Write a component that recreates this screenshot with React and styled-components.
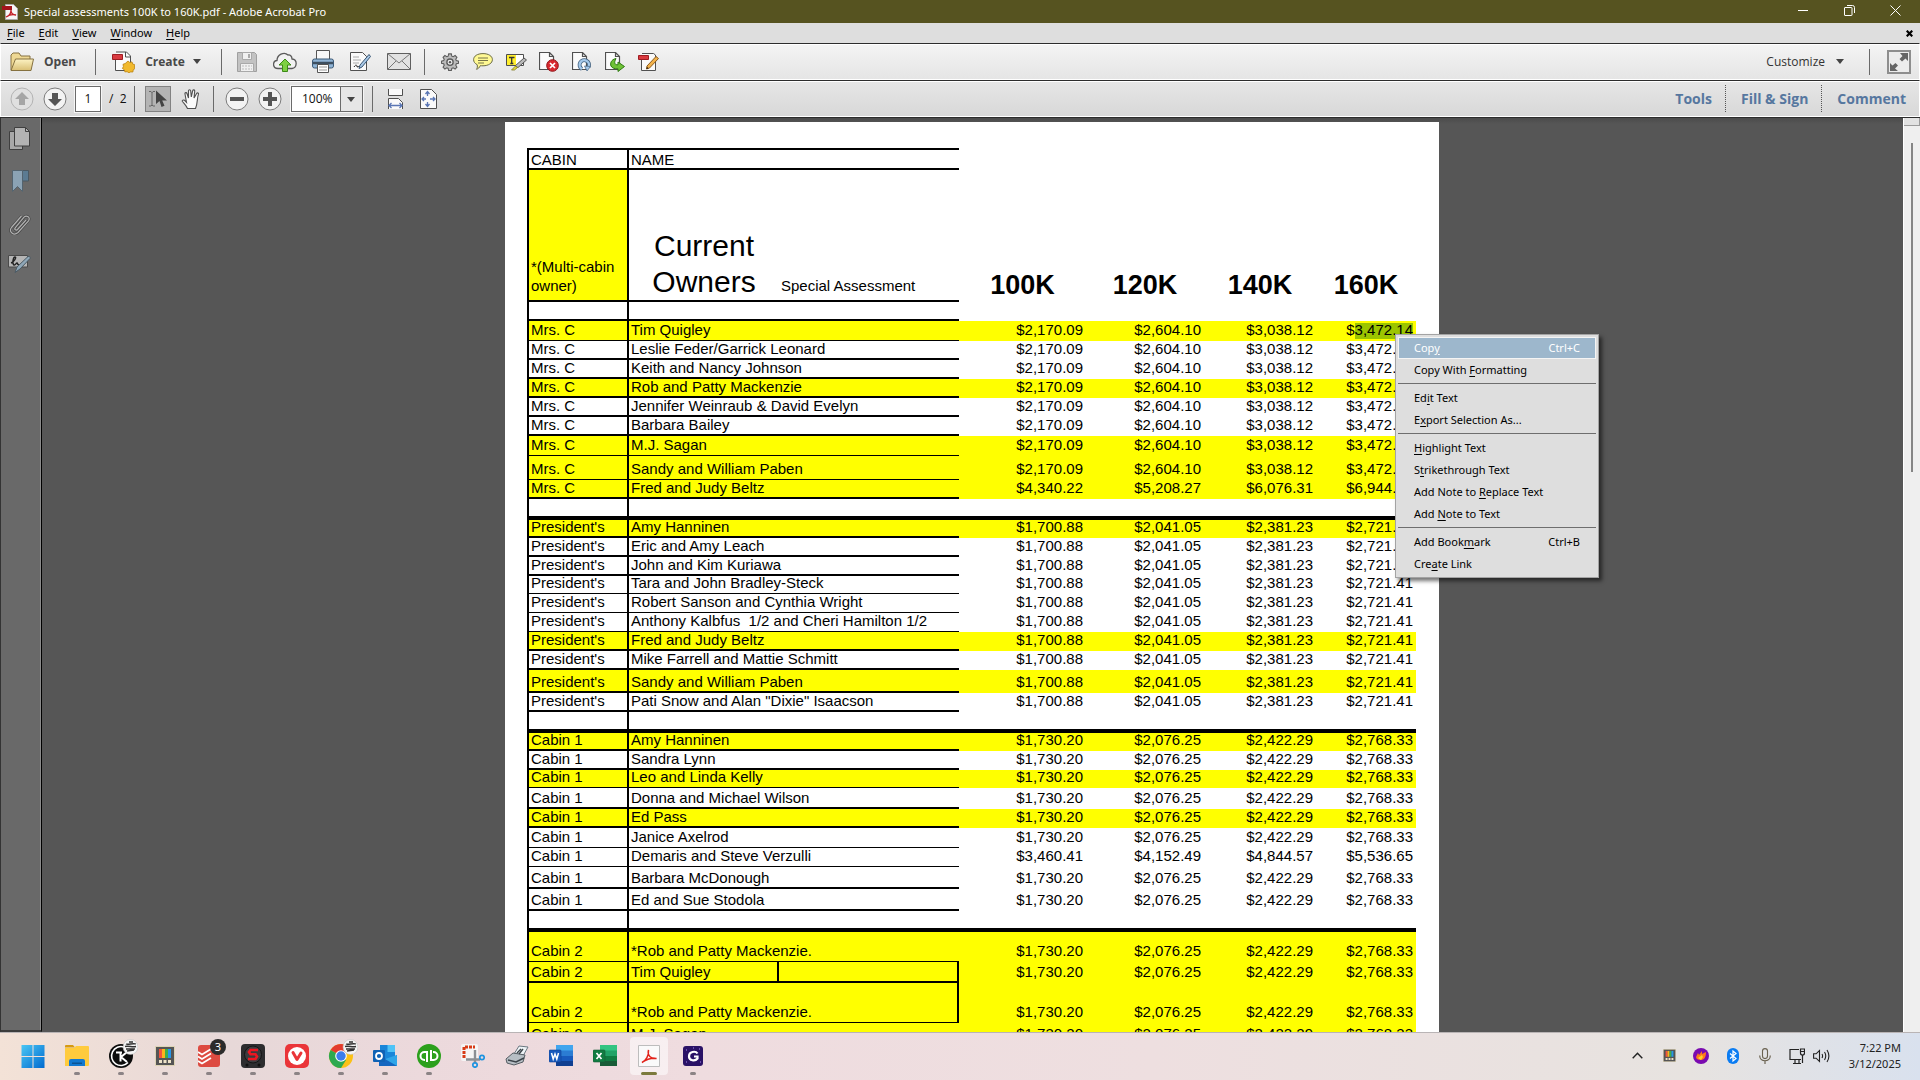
import React from "react";
import styled, { createGlobalStyle, css } from "styled-components";

const Global = createGlobalStyle`
  * { box-sizing: border-box; }
  html, body, #root { height: 100%; }
  body { margin: 0; overflow: hidden; font-family: "Noto Sans", "Open Sans", sans-serif; font-size: 12px; color: #111; }
  button, input, select { font: inherit; color: inherit; margin: 0; padding: 0; border: 0; background: none; border-radius: 0; outline: 0; }
  svg { display: block; flex: none; }
`;

/* ---------- window frame ---------- */
const Shell = styled.div`
  position: relative;
  display: flex;
  flex-direction: column;
  height: 100vh;
  overflow: hidden;
`;
const TitleBar = styled.header`
  flex: none;
  display: flex;
  align-items: center;
  height: 23px;
  padding: 0 2px;
  background: #565320;
  color: #fff;
`;
const Title = styled.h1`
  flex: 1;
  margin: 0 0 0 6px;
  font-size: 11px;
  line-height: 20px;
  font-weight: 400;
`;
const WinButton = styled.button`
  display: flex;
  justify-content: center;
  width: 46px;
  padding-bottom: 2px;
`;
const MenuBar = styled.nav`
  flex: none;
  display: flex;
  align-items: center;
  gap: 14px;
  height: 20px;
  padding: 0 7px;
  background: #dedede;
  font-size: 11px;
  line-height: 18px;
`;
const MenuButton = styled.button`
  color: #000;
`;
const CloseDoc = styled.button`
  margin-left: auto;
`;
const Key = styled.u`
  text-underline-offset: 2px;
  text-decoration-thickness: 1px;
`;

/* ---------- toolbars ---------- */
const Bar = styled.div`
  flex: none;
  display: flex;
  align-items: center;
  height: 37px;
  padding-left: ${(p) => (p.$dark ? 4 : 9)}px;
  border: 1px solid #fff;
  border-top: 1px solid #2c2c2c;
  box-shadow: inset 0 1px #fff;
  background: linear-gradient(${(p) => (p.$dark ? "#e6e6e6, #d8d8d8" : "#f4f4f4, #e5e5e5")});
  font-family: "Open Sans", sans-serif;
`;
const Sep = styled.span`
  flex: none;
  width: 1px;
  height: 26px;
  margin: 0 ${(p) => p.$right || 0}px 0 ${(p) => p.$left || 0}px;
  background: #6a6a6a;
`;
const LabelButton = styled.button`
  display: flex;
  align-items: center;
  gap: 8px;
  font-size: 12px;
  font-weight: 700;
  color: #484848;
  svg:first-child { margin-right: 2px; }
`;
const IconButton = styled.button`
  display: flex;
  align-items: center;
  justify-content: center;
  width: ${(p) => p.$w}px;
  height: 28px;
`;
const Customize = styled.button`
  display: flex;
  align-items: center;
  gap: 11px;
  margin-left: auto;
  color: #333;
`;
const PageInput = styled.input`
  width: 26px;
  height: 26px;
  margin-left: 4px;
  border: 1px solid #6b6b6b;
  background: #fff;
  text-align: center;
  box-shadow: 0 0 0 1px #f6f6f6;
`;
const PageCount = styled.span`
  width: 33px;
  padding-left: 8px;
  white-space: pre;
`;
const ToolToggle = styled.button`
  display: flex;
  align-items: center;
  justify-content: center;
  width: 26px;
  height: 26px;
  margin: 0 3px 0 10px;
  border: 1px solid #828282;
  background: #b4b4b4;
`;
const ZoomBox = styled.div`
  position: relative;
  margin-left: 5px;
  box-shadow: 0 0 0 1px #f6f6f6;
  svg { position: absolute; right: 8px; top: 11px; pointer-events: none; }
`;
const ZoomSelect = styled.select`
  appearance: none;
  display: block;
  width: 72px;
  height: 26px;
  padding-left: 10px;
  border: 1px solid #6b6b6b;
  background: linear-gradient(90deg, #fff 48px, #6b6b6b 48px, #6b6b6b 49px, #e6e6e6 49px);
`;
const PaneLinks = styled.div`
  display: flex;
  align-items: center;
  margin-left: auto;
`;
const PaneButton = styled.button`
  height: 27px;
  padding: 0 13px 0 15px;
  border-left: ${(p) => (p.$first ? "0" : "1px dotted #555")};
  font-size: 14px;
  font-weight: 700;
  color: #56779f;
`;

/* ---------- document area ---------- */
const Work = styled.main`
  flex: 1;
  display: flex;
  min-height: 0;
  border-top: 1px solid #2c2c2c;
  background: linear-gradient(#4b4b4b, #565656 6px);
`;
const Side = styled.aside`
  display: flex;
  flex-direction: column;
  align-items: center;
  gap: 20px;
  width: 42px;
  padding: 9px 3px 0 0;
  background: #696969;
  border-left: 1px solid #333;
  border-right: 1px solid #000;
  border-bottom: 2px solid #3d3d3d;
  box-shadow: inset -1px 0 #8a8a8a;
`;
const SideButton = styled.button`
  display: flex;
`;
const Canvas = styled.section`
  flex: 1;
  display: flex;
  justify-content: center;
  align-items: flex-start;
  overflow: hidden;
  padding: 4px 1px 0 0;
`;
const Track = styled.div`
  display: flex;
  flex-direction: column;
  align-items: center;
  gap: 17px;
  width: 17px;
  border-left: 1px solid #fff;
  background: #efefef;
`;
const SplitGrip = styled.span`
  align-self: stretch;
  height: 8px;
  border: 1px solid #9b9b9b;
  border-width: 0 1px 1px 0;
  background: #e2e2e2;
`;
const Thumb = styled.span`
  width: 2px;
  height: 36%;
  background: #858585;
`;
const Sheet = styled.article`
  padding: 26px 23px 40px 22px;
  background: #fff;
`;
const Table = styled.table`
  table-layout: fixed;
  width: 889px;
  border-collapse: separate;
  border-spacing: 0;
  font: 15px/14px "Liberation Sans", Arial, sans-serif;
  color: #000;
  td, th { padding: 0 2px; text-align: left; vertical-align: bottom; font-weight: 400; white-space: nowrap; }
`;
const Cell = styled.td`
  height: ${(p) => p.$h}px;
  border: 0 solid #000;
  border-bottom-width: ${(p) => p.$line}px;
  background: ${(p) => (p.$hl ? "#ff0" : "transparent")};
  && { padding-bottom: ${(p) => Math.max(0, 4 - p.$line)}px; }
`;
const CabinCell = styled(Cell)`
  border-left-width: 2px;
  border-right-width: 2px;
`;
const BoxedCell = styled(Cell)`
  border-right-width: 2px;
`;
const Amount = styled(Cell)`
  && { text-align: right; padding: 0 3px 4px 0; }
`;
const Mark = styled.span`
  display: inline-block;
  padding-bottom: 2px;
  margin-bottom: -2px;
  background: #9cc500;
`;
const HeadCell = styled.th`
  height: 22px;
  border: 0 solid #000;
  border-width: 2px ${(p) => (p.$cabin ? 2 : 0)}px 2px ${(p) => (p.$cabin ? 2 : 0)}px;
  && { padding-bottom: 1px; }
`;
const TallCell = styled(Cell)`
  ${(p) => p.$cabin && css`border-left-width: 2px; border-right-width: 2px;`}
  line-height: 19px;
  && { padding-bottom: 5px; white-space: normal; }
`;
const Owners = styled(Cell)`
  font-size: 30px;
  line-height: 36px;
  && { padding-bottom: 0; text-align: center; white-space: normal; }
`;
const Level = styled(Cell)`
  font-size: 27px;
  line-height: 32px;
  && { padding: 0 0 1px; text-align: center; font-weight: 700; }
`;

/* ---------- context menu ---------- */
const Menu = styled.menu`
  position: absolute;
  left: 1395px;
  top: 334px;
  width: 204px;
  margin: 0;
  padding: 2px;
  border: 1px solid #a3a3a3;
  background: #dedede;
  box-shadow: 3px 3px 4px rgba(0, 0, 0, 0.55);
  list-style: none;
  font-size: 11px;
`;
const MenuItem = styled.button`
  display: flex;
  align-items: center;
  justify-content: space-between;
  width: 100%;
  height: 22px;
  padding: 0 15px 2px;
  border: 1px solid ${(p) => (p.$on ? "#f4f4f4" : "transparent")};
  background: ${(p) => (p.$on ? "#9db7cc" : "none")};
  color: ${(p) => (p.$on ? "#fff" : "#000")};
`;
const Rule = styled.li`
  height: 1px;
  margin: 2px 0 3px;
  background: #6e6e6e;
`;

/* ---------- taskbar ---------- */
const TaskBar = styled.footer`
  flex: none;
  display: flex;
  align-items: center;
  height: 48px;
  padding: 0 19px 2px 11px;
  border-top: 1px solid #b9b4b5;
  background: linear-gradient(90deg, #f3e2d7, #e7d8d8 12%, #ecd9dc 22%, #efdcdf 36%, #eedfe0 60%, #e7e3e0 88%, #d9e1ee);
`;
const Task = styled.button`
  position: relative;
  display: flex;
  align-items: center;
  justify-content: center;
  width: 38px;
  height: 38px;
  margin: 0 3px;
  border-radius: 4px;
  background: ${(p) => (p.$active ? "rgba(255,255,255,.55)" : "none")};
  &::after {
    content: "";
    position: absolute;
    bottom: 0;
    width: ${(p) => (p.$active ? 16 : p.$open ? 6 : 0)}px;
    height: 3px;
    border-radius: 2px;
    background: ${(p) => (p.$active ? "#7c7a3c" : "#8b8385")};
  }
`;
const Count = styled.span`
  position: absolute;
  top: 2px;
  right: 2px;
  width: 16px;
  height: 16px;
  border-radius: 8px;
  background: #2b2b2b;
  color: #fff;
  font-size: 11px;
  line-height: 16px;
`;
const Tray = styled.div`
  display: flex;
  align-items: center;
  margin-left: auto;
`;
const TrayButton = styled.button`
  display: flex;
  align-items: center;
  justify-content: center;
  width: ${(p) => p.$w || 32}px;
  height: 38px;
`;
const Clock = styled.time`
  width: 72px;
  text-align: right;
  font-size: 11px;
  line-height: 16px;
  color: #222;
`;

/* ---------- drawings ---------- */
const I = ({ w = 24, h = w, vb, children }) => (
  <svg width={w} height={h} viewBox={vb || `0 0 ${w} ${h}`} fill="none" aria-hidden="true">
    {children}
  </svg>
);
const Caret = ({ c = "#444" }) => <I w={8} h={5}><path d="M0 0h8L4 5z" fill={c} /></I>;
const Paper = () => (
  <path d="M1.5 1.5h10l4 4v13h-14z M11.5 1.5v4h4" fill="#fbfbfb" stroke="#505050" strokeWidth="1.2" />
);
const FolderIcon = () => (
  <I w={24} h={20}>
    <defs><linearGradient id="fo" x2="0" y2="1"><stop stopColor="#fdf3c4" /><stop offset="1" stopColor="#d9bf74" /></linearGradient></defs>
    <path d="M1 18V3l2-2h6l2 3h9v3" fill="#eed894" stroke="#857140" />
    <path d="M1 18.500L5.500 7H23.500L21 18.500z" fill="url(#fo)" stroke="#857140" />
  </I>
);
const CreateIcon = () => (
  <I w={23} h={23}>
    <path d="M3.500 8v12.500h15V6l-4-4H4" fill="#fbfbfb" stroke="#505050" />
    <path d="M13.500 2v5h5" stroke="#505050" />
    <path d="M0.500 4.500h10v5h-10z" fill="#d93a40" stroke="#9e1c22" />
    <path d="M16 11l1.800 1.500 2.200-.6.800 2.200 2.200.8-.6 2.200L23 18.500l-1.800 1.300-.3 2.200-2.300-.1L17 23l-1.800-1.300-2.300.2-.6-2.200-1.900-1.200 1-2-.4-2.200 2.200-.8z" fill="#f1b92d" stroke="#b98112" strokeWidth=".8" />
  </I>
);
const SaveIcon = () => (
  <I w={20}>
    <path d="M.5.500h17l2 2v17H.500z" fill="#c3c3c3" stroke="#a0a0a0" />
    <path d="M5.500.500h9v7h-9zM3.500 11.500h13v8h-13z" fill="#f0f0f0" stroke="#a9a9a9" />
    <path d="M11 2h2v4h-2z" fill="#aaa" /><path d="M5 14h10M5 17h10" stroke="#bbb" strokeDasharray="2 1" />
  </I>
);
const CloudIcon = () => (
  <I w={24} h={20}>
    <path d="M5 16.500C-1 16-.500 9 4 8.500 4 3 11-1 15 3c2-.5 4 1 4 4 6 .5 5 9 0 9.500z" fill="#f2f2f2" stroke="#5a5a5a" strokeWidth="1.300" />
    <path d="M12 7l6 6h-3.500v6.500h-5V13H6z" fill="#7ed043" stroke="#3c8a17" />
  </I>
);
const PrintIcon = () => (
  <I w={22} h={23}>
    <path d="M4.500 9V.500h13V9" fill="#f8f8f8" stroke="#555" />
    <rect x=".5" y="9" width="21" height="9" rx="2" fill="#8fb4d6" stroke="#3d5a77" />
    <path d="M1 13h20" stroke="#3d4f60" strokeWidth="2.500" />
    <path d="M5.500 14.500h11v8h-11z" fill="#fff" stroke="#555" /><path d="M7 17h8M7 20h8" stroke="#999" />
  </I>
);
const EditDocIcon = () => (
  <I w={21} h={21}>
    <path d="M.5 1.500h12l4 4v14H.500z" fill="#fafafa" stroke="#505050" />
    <path d="M3 6h6M3 9h8M3 12h6" stroke="#aaa" />
    <path d="M4 16c2-3 3-2 3 0 2-1 3 0 4 0" stroke="#222" />
    <path d="M19 3.500l1.500 2L12 16l-3 1.500L10 14z" fill="#a8c8e6" stroke="#385573" />
  </I>
);
const MailIcon = () => (
  <I w={24} h={17}>
    <path d="M.5.500h23v16H.500z" fill="#e2e2e2" stroke="#5f5f5f" />
    <path d="M.5.500L12 10 23.500.500M.500 16.500L9 8M23.500 16.500L15 8" stroke="#777" />
  </I>
);
const GearIcon = () => (
  <I w={18} vb="0 0 20 20">
    <path d="M8.500 1h3l.5 2.500 1.500.6L15.700 2.800l2 2-1.300 2.100.6 1.600 2.500.5v2.500l-2.500.5-.6 1.600 1.300 2.200-2 2-2.200-1.400-1.500.7L11.500 19.500h-3L8 17.100l-1.500-.7-2.200 1.400-2-2 1.300-2.200L3 12l-2.500-.5V9L3 8.500l.6-1.600L2.300 4.800l2-2 2.200 1.300L8 3.500z" fill="#bcbcbc" stroke="#5c5c5c" strokeWidth="1.200" />
    <circle cx="10" cy="10.200" r="3.500" fill="#eee" stroke="#5c5c5c" strokeWidth="1.500" /><circle cx="10" cy="10.200" r="1.300" fill="#555" />
  </I>
);
const NoteIcon = () => (
  <I w={20} h={17}>
    <path d="M10 .6c5.500 0 9.400 2.500 9.400 6s-3.900 6.200-9.400 6.200c-1 0-1.800 0-2.600-.2C6.500 14.500 5 16 3.500 16.300c1-1.300 1-2.800.7-4.600C2 10.600.6 8.800.6 6.700.6 3 4.500.6 10 .6z" fill="#fff993" stroke="#6a6a45" />
    <path d="M5 5h10M5 7.500h10M5 10h6" stroke="#77744a" />
  </I>
);
const HighlightIcon = () => (
  <I w={21} h={18}>
    <path d="M.5 1.500h17v11H.500z" fill="#fff" stroke="#4d4d4d" /><path d="M1 2h9v10H1z" fill="#ffee2e" />
    <path d="M3 4.500h5.500M5.700 4.500v6M4.300 10.500h3" stroke="#333" strokeWidth="1.300" />
    <path d="M18 5l2.500 2L12 14.500 9 13z" fill="#b8b8b8" stroke="#555" />
    <path d="M9.500 13l2 1.500-3 2.500H5.500z" fill="#e3da35" stroke="#807a22" strokeWidth=".8" />
  </I>
);
const DeletePageIcon = () => (
  <I w={20} h={20}>
    <g transform="translate(-1 -1)"><Paper /></g>
    <circle cx="13.500" cy="13.500" r="5.800" fill="#d9282e" stroke="#8f1317" /><path d="M11 11l5 5M16 11l-5 5" stroke="#fff" strokeWidth="1.700" />
  </I>
);
const RotatePageIcon = () => (
  <I w={20} h={20}>
    <g transform="translate(-1 -1)"><Paper /></g>
    <path d="M10 17a4.700 4.700 0 1 1 6.500-2" stroke="#42617f" strokeWidth="4" /><path d="M10 17a4.700 4.700 0 1 1 6.500-2" stroke="#a4c8ea" strokeWidth="2.400" />
    <path d="M12.500 14l6 .5-3.500 4.500z" fill="#a4c8ea" stroke="#42617f" strokeWidth=".7" />
  </I>
);
const ExportPageIcon = () => (
  <I w={20} h={20}>
    <g transform="translate(-1 -1)"><Paper /></g>
    <path d="M11 6.500c-5 1-6 5-5 7.500 1 2.200 4 3 7 2.800V19.500l6.500-5L13 10v2.800c-3 .2-4.500-1.500-2-6.300z" fill="#6fc236" stroke="#2f7a12" />
  </I>
);
const PdfEditIcon = () => (
  <I w={21} h={20}>
    <path d="M3.500 5v13.500h14V3l-2-1.500H4" fill="#fafafa" stroke="#505050" />
    <path d="M.5 3.500h10v4H.500z" fill="#d93a40" stroke="#9e1c22" />
    <path d="M18 4.500l2.500 2-9 9.500L8.500 17l.5-3z" fill="#f3b34b" stroke="#8d5a1b" /><path d="M8.500 17l.5-2 1.500 1.200z" fill="#111" />
  </I>
);
const ExpandIcon = () => (
  <I w={24} h={24}>
    <path d="M1 1h22v22H1z" fill="#ececec" stroke="#8e8e8e" strokeWidth="2" />
    <path d="M21 3v8l-2.500-2.500-3.500 3-2.500-2.500 3-3L13 3zM3 21v-8l2.500 2.500L8.500 13l2.500 2.500-3 3L11 21z" fill="#666" />
  </I>
);
const Round = ({ faded, children }) => (
  <I w={24}>
    <circle cx="12" cy="12" r="11" fill={faded ? "#e0e0e0" : "#f3f3f3"} stroke={faded ? "#b3b3b3" : "#7c7c7c"} />
    <g fill={faded ? "#a5a5a5" : "#555"}>{children}</g>
  </I>
);
const SelectIcon = () => (
  <I w={20} h={20}>
    <path d="M1 2.500h2l1 1 1-1h2M4 3v13M1 17h2l1-1 1 1h2" stroke="#666" />
    <path d="M8 1.500v13.500l3.500-3 2 6 3-1.300-2.300-5.200H19z" fill="#444" />
  </I>
);
const HandIcon = () => (
  <I w={20} h={20}>
    <path d="M6.500 19.500c-1-2.500-3-4.500-5-7-.8-1.200.8-2 2-1.200l2 2L4 5c-.3-1.500 1.500-2 2-.5L7.500 9l0-7c0-1.700 2-1.700 2.200 0L10.300 8l1.400-6.300c.4-1.400 2.200-1 2 .5L13 9l2.600-4.500c.8-1.200 2.200-.4 1.800.9C16 9 16.800 14 14.500 19.500z" fill="#fafafa" stroke="#505050" strokeWidth="1.100" />
  </I>
);
const FitWidthIcon = () => (
  <I w={17} h={20}>
    <path d="M1.500 0v6.500h14V0M1.500 20V9.500h10l4 4V20" fill="#fafafa" stroke="#505050" />
    <path d="M2 16.500h13M4.500 14L2 16.500 4.500 19M12.500 14l2.500 2.500-2.500 2.500" stroke="#5a76b4" strokeWidth="1.300" />
  </I>
);
const FitPageIcon = () => (
  <I w={17} h={20}>
    <path d="M.5.500h11l5 5v14H.500z" fill="#fafafa" stroke="#505050" />
    <path d="M7.500 3v4M7.500 13v4M2 10h4M10 10h5M5.500 5l2-2.500 2 2.500M5.500 15l2 2.500 2-2.500M4 8l-2 2 2 2M13 8l2 2-2 2" stroke="#5a76b4" strokeWidth="1.300" />
  </I>
);
const ThumbsIcon = () => (
  <I w={21} h={23}><path d="M.5 4.500h13v18H.500z" fill="#a8a8a8" stroke="#3f3f3f" /><path d="M5.500.500h11l4 4V19h-15z" fill="#b3b3b3" stroke="#3f3f3f" /><path d="M16.500.500v4h4" stroke="#3f3f3f" /></I>
);
const BookmarkIcon = () => (
  <I w={18} h={22}><path d="M10 .500h7.500V11H11" fill="#5b7b92" stroke="#4a5963" /><path d="M1.500.500h10v21l-5-5-5 5z" fill="#8ba3b5" stroke="#536470" /></I>
);
const ClipIcon = () => (
  <I w={22} h={23}>
    <path d="M17 8l-8.500 9.500c-1.500 1.500-3.500 0-2.300-1.700L15 5.200c2.500-2.700 7 .2 4.500 3.600L9 20.500c-4.500 4-9.500-1-6.500-5L12.500 4" stroke="#444" strokeWidth="2.600" />
    <path d="M17 8l-8.500 9.500c-1.500 1.500-3.500 0-2.300-1.700L15 5.200c2.500-2.700 7 .2 4.500 3.600L9 20.500c-4.500 4-9.500-1-6.500-5L12.500 4" stroke="#b1b1b1" strokeWidth="1.200" />
  </I>
);
const SignIcon = () => (
  <I w={23} h={18}>
    <path d="M.5.500h19V12H.500z" fill="#b5b5b5" stroke="#4a4a4a" />
    <path d="M3 8c3-1 6-6 4-6S4 9 6 10c1.500.5 2-2 3-2s0 2 2 1.500" stroke="#222" strokeWidth="1.400" />
    <path d="M20 1.500c1.500-.5 2.500.5 2 2L12 14l-5 3.500L9 12z" fill="#8fa7b8" stroke="#4a5963" />
  </I>
);
const Adobe = ({ w = 16 }) => (
  <I w={w} vb="0 0 16 16">
    <path d="M3.500.500h8l4 4v11h-12z" fill="#f6f6f6" stroke="#aaa" /><path d="M0 2h10v4H0z" fill="#a4141b" />
    <path d="M4 13c3-1 5-4 5-7 0 3 2 5 5 5-4-1-7 0-10 2z" stroke="#c21f26" strokeWidth="1.300" />
  </I>
);
const StartIcon = () => (
  <I w={24}><defs><linearGradient id="st" gradientUnits="userSpaceOnUse" x1="0" y1="0" x2="24" y2="24"><stop stopColor="#4cc9f5" /><stop offset="1" stopColor="#0069cf" /></linearGradient></defs>
    <path d="M.5 1h11v11H.500zM12.500 1h11v11h-11zM.500 13h11v11H.500zM12.500 13h11v11h-11z" fill="url(#st)" /></I>
);
const ExplorerIcon = () => (
  <I w={24}><path d="M0 2q0-1 1-1h7l2 2.500H0z" fill="#d69a12" /><path d="M0 4h9l2-2h12q1 0 1 1v18q0 1-1 1H0z" fill="#ffcb3d" /><path d="M4 22v-5q0-2 2-2h12q2 0 2 2v5z" fill="#1279d0" /><path d="M7 18.500h10v1.500H7z" fill="#0b5494" /></I>
);
const Badge = () => (
  <g><circle cx="21.500" cy="3" r="7.500" fill="#f4f4f4" stroke="#bbb" strokeWidth=".5" /><path d="M17 0c2 1 7-1 10 0M16 2.500c4-1 7 1 11 0M17 5h9M18 7l7-1M20-2h4" stroke="#333" strokeWidth="1.300" /></g>
);
const Wide = ({ children }) => <I w={34} h={34} vb="-5 -5 34 34">{children}</I>;
const KIcon = () => (
  <Wide><circle cx="12" cy="12" r="12" fill="#0c0c0c" /><path d="M19 18.500a9.500 9.500 0 1 1-4-15.500" stroke="#fff" strokeWidth="1.600" /><path d="M7 8.500h6M11.500 8.500v9M18 8l-6 5 6 5" stroke="#fff" strokeWidth="2" /><Badge /></Wide>
);
const ToysIcon = ({ w = 20 }) => (
  <I w={w} vb="0 0 20 20"><path d="M0 0h20v20H0z" fill="#ddd3b5" /><path d="M1 1h18v18H1z" fill="#555" /><path d="M4 3h3v9H4z" fill="#f2543d" /><path d="M7 3h3v9H7z" fill="#fbb51c" /><path d="M10 3h3v9h-3z" fill="#3fae49" /><path d="M13 3h3v9h-3z" fill="#2897e8" /><path d="M4 14h3v3H4zM8.500 14h3v3h-3zM13 14h3v3h-3z" fill="#eee3c8" /></I>
);
const TodoistIcon = () => (
  <I w={22}><rect width="22" height="22" rx="3" fill="#dd4b41" /><path d="M0 7l4 2.500L13 4M0 11.500L4 14l9-5.500M0 16l4 2.500L13 13" stroke="#fff" strokeWidth="1.700" /></I>
);
const SIcon = () => (
  <I w={24}><rect width="24" height="24" rx="4" fill="#2d2d2f" /><circle cx="12" cy="10.500" r="8.500" fill="#3b3b3e" stroke="#151515" /><path d="M17 6H9.500L8 8l1.500 2.200h5L16 12.500 14.500 15H7" stroke="#ee1620" strokeWidth="2.600" /><circle cx="6" cy="21" r="1.500" fill="#111" /><circle cx="18" cy="21" r="1.500" fill="#111" /></I>
);
const VivaldiIcon = () => (
  <I w={24}><rect width="24" height="24" rx="5" fill="#ea3539" /><circle cx="12" cy="12" r="9" fill="#fff" /><path d="M8 8.500l4 7 4-6.500" stroke="#ea3539" strokeWidth="3" strokeLinecap="round" strokeLinejoin="round" /></I>
);
const ChromeIcon = () => (
  <Wide><circle cx="12" cy="12" r="12" fill="#fbc116" /><path d="M12 12L1.600 6A12 12 0 0 1 22.400 6z" fill="#e33b2e" /><path d="M12 12L1.600 6A12 12 0 0 0 12 24l5-8z" fill="#2da94f" /><circle cx="12" cy="12" r="5.800" fill="#fff" /><circle cx="12" cy="12" r="4.700" fill="#3b7ded" /><Badge /></Wide>
);
const OutlookIcon = () => (
  <I w={24}><path d="M7 1h15v14H7z" fill="#1a86d9" /><path d="M14.500 1H22v7h-7.500z" fill="#4fc3f7" /><path d="M6 22V11l9 5 9-5v11z" fill="#1466c0" /><path d="M24 11v11L12 15z" fill="#2fa5e8" /><rect y="6" width="12" height="12" rx="1" fill="#0f62b5" /><circle cx="6" cy="12" r="3" stroke="#fff" strokeWidth="1.800" /></I>
);
const QbIcon = () => (
  <I w={24}><circle cx="12" cy="12" r="12" fill="#2ca01c" /><path d="M10 18V8H7.500a4 4 0 0 0 0 8H8M14 6v10h2.500a4 4 0 0 0 0-8H16" stroke="#fff" strokeWidth="2" /></I>
);
const SnipIcon = () => (
  <I w={24}><rect width="17" height="17" rx="2" fill="#f5f5f5" /><path d="M3 14V3h11" stroke="#d83b16" strokeWidth="3" strokeDasharray="3 1" /><path d="M14 6v13M5 15.500h14" stroke="#8b8f94" strokeWidth="2.400" /><circle cx="21" cy="13.500" r="2.200" stroke="#1c93e0" strokeWidth="1.700" /><circle cx="14" cy="21" r="2.200" stroke="#1c93e0" strokeWidth="1.700" /></I>
);
const ScannerIcon = () => (
  <I w={24}><path d="M9 10l5-8 9 1-5 9z" fill="#eef3f6" stroke="#6b7780" /><path d="M1 15l7-6 12 2-2 7-9 3-7-2z" fill="#b7bec4" stroke="#555d63" /><path d="M3 16l8 2 8-4M12 9l4-4M14 10l4-5" stroke="#3b4349" strokeWidth="1.400" /></I>
);
const OfficeIcon = ({ c, children }) => (
  <I w={24}><path d="M7 1h17v6H7z" fill={c[0]} /><path d="M7 6.500h17v5.500H7z" fill={c[1]} /><path d="M7 12h17v5.500H7z" fill={c[2]} /><path d="M7 17h17v5H7z" fill={c[3]} /><rect y="6" width="12" height="12" rx="1" fill={c[2]} stroke={c[3]} strokeWidth=".6" />{children}</I>
);
const AcroTask = () => (
  <I w={22}><path d="M.5.500h21v21H.500z" fill="#fafafa" stroke="#bdbdbd" /><path d="M4 17.500c4-2 7-7 6.500-12.500-1.500 6 3 9 8 8.500-5-1-10 1-14.500 4z" stroke="#e2231a" strokeWidth="1.500" /></I>
);
const GIcon = () => (
  <I w={20} h={20}><rect width="20" height="20" rx="3" fill="#2a1266" /><path d="M14.500 7.500c-2-3-8.500-2-8.500 2.700 0 4.500 6 5.500 8.500 2.300v-2H11" stroke="#fff" strokeWidth="2.200" /><path d="M3 4h1M16 3h1M3 16h1M17 16h1M10 2h1" stroke="#a98bf0" /></I>
);

/* ---------- data ---------- */
const M = ["$2,170.09", "$2,604.10", "$3,038.12", "$3,472.14"];
const M2 = ["$4,340.22", "$5,208.27", "$6,076.31", "$6,944.28"];
const P = ["$1,700.88", "$2,041.05", "$2,381.23", "$2,721.41"];
const C = ["$1,730.20", "$2,076.25", "$2,422.29", "$2,768.33"];
const C2 = ["$3,460.41", "$4,152.49", "$4,844.57", "$5,536.65"];
// cabin, name, amounts, highlighted, row height, rule thickness
const gap = (h, line = 4) => ["", "", ["", "", "", ""], 0, h, line];
const rows = [
  gap(19, 2),
  ["Mrs. C", "Tim Quigley", M, 1, 20, 1],
  ["Mrs. C", "Leslie Feder/Garrick Leonard", M, 0, 19, 2],
  ["Mrs. C", "Keith and Nancy Johnson", M, 0, 19, 2],
  ["Mrs. C", "Rob and Patty Mackenzie", M, 1, 19, 2],
  ["Mrs. C", "Jennifer Weinraub & David Evelyn", M, 0, 19, 2],
  ["Mrs. C", "Barbara Bailey", M, 0, 19, 2],
  ["Mrs. C", "M.J. Sagan", M, 1, 20, 1],
  ["Mrs. C", "Sandy and William Paben", M, 1, 24, 1],
  ["Mrs. C", "Fred and Judy Beltz", M2, 1, 19, 2],
  gap(21),
  ["President's", "Amy Hanninen", P, 1, 18, 2],
  ["President's", "Eric and Amy Leach", P, 0, 19, 2],
  ["President's", "John and Kim Kuriawa", P, 0, 19, 2],
  ["President's", "Tara and John Bradley-Steck", P, 0, 18, 1],
  ["President's", "Robert Sanson and Cynthia Wright", P, 0, 19, 1],
  ["President's", "Anthony Kalbfus\u00a0 1/2 and Cheri Hamilton 1/2", P, 0, 19, 1],
  ["President's", "Fred and Judy Beltz", P, 1, 19, 2],
  ["President's", "Mike Farrell and Mattie Schmitt", P, 0, 19, 2],
  ["President's", "Sandy and William Paben", P, 1, 23, 2],
  ["President's", 'Pati Snow and Alan "Dixie" Isaacson', P, 0, 19, 2],
  gap(21),
  ["Cabin 1", "Amy Hanninen", C, 1, 18, 2],
  ["Cabin 1", "Sandra Lynn", C, 0, 19, 2],
  ["Cabin 1", "Leo and Linda Kelly", C, 1, 18, 1],
  ["Cabin 1", "Donna and Michael Wilson", C, 0, 21, 2],
  ["Cabin 1", "Ed Pass", C, 1, 19, 2],
  ["Cabin 1", "Janice Axelrod", C, 0, 20, 1],
  ["Cabin 1", "Demaris and Steve Verzulli", C2, 0, 19, 1],
  ["Cabin 1", "Barbara McDonough", C, 0, 22, 2],
  ["Cabin 1", "Ed and Sue Stodola", C, 0, 22, 2],
  gap(21),
  ["Cabin 2", "*Rob and Patty Mackenzie.", C, 1, 30, 1],
  ["Cabin 2", "Tim Quigley", C, 1, 21, 2, "split"],
  ["Cabin 2", "*Rob and Patty Mackenzie.", C, 1, 40, 1, "box"],
  ["Cabin 2", "M.J. Sagan", C, 1, 22, 1],
];

// "_" goes before the access key's letter
const Keyed = ({ text }) => {
  const i = text.indexOf("_");
  return <span>{text.slice(0, i)}<Key>{text[i + 1]}</Key>{text.slice(i + 2)}</span>;
};
const menuItems = [
  ["Cop_y", "Ctrl+C"], ["Copy With _Formatting"], null,
  ["Ed_it Text"], ["E_xport Selection As..."], null,
  ["_Highlight Text"], ["S_trikethrough Text"], ["Add Note to _Replace Text"], ["Add _Note to Text"], null,
  ["Add Book_mark", "Ctrl+B"], ["Cre_ate Link"],
];

function NameCells({ name, h, line, hl, kind }) {
  const p = { $h: h, $line: line, $hl: hl };
  if (kind === "split") return <><BoxedCell {...p}>{name}</BoxedCell><BoxedCell {...p} /></>;
  if (kind === "box") return <BoxedCell {...p} colSpan={2}>{name}</BoxedCell>;
  return <Cell {...p} colSpan={2}>{name}</Cell>;
}

function Assessments() {
  return (
    <Table>
      <colgroup>
        {[102, 150, 180, 127, 118, 112, 100].map((w, i) => <col key={i} width={w} />)}
      </colgroup>
      <thead>
        <tr><HeadCell $cabin>CABIN</HeadCell><HeadCell colSpan={2}>NAME</HeadCell></tr>
      </thead>
      <tbody>
        <tr>
          <TallCell $cabin $h={132} $line={2} $hl>*(Multi-cabin owner)</TallCell>
          <Owners $h={132} $line={2}>Current Owners</Owners>
          <TallCell $h={132} $line={2}>Special Assessment</TallCell>
          {["100K", "120K", "140K", "160K"].map((t) => <Level key={t} $h={132} $line={0}>{t}</Level>)}
        </tr>
        {rows.map(([cabin, name, sums, hl, h, line, kind], r) => (
          <tr key={r}>
            <CabinCell $h={h} $line={line} $hl={hl}>{cabin}</CabinCell>
            <NameCells name={name} h={h} line={line} hl={hl} kind={kind} />
            {sums.map((s, c) => (
              <Amount key={c} $h={h} $line={line === 4 ? 4 : 0} $hl={hl}>
                {r === 1 && c === 3 ? <>$<Mark>{s.slice(1)}</Mark></> : s}
              </Amount>
            ))}
          </tr>
        ))}
      </tbody>
    </Table>
  );
}

export default function App() {
  return (
    <Shell>
      <Global />
      <TitleBar>
        <Adobe />
        <Title>Special assessments 100K to 160K.pdf - Adobe Acrobat Pro</Title>
        <WinButton aria-label="Minimize"><I w={11}><path d="M0 5.500h10" stroke="#fff" /></I></WinButton>
        <WinButton aria-label="Restore"><I w={11}><path d="M.5 3q0-.5.500-.5h6.500q.5 0 .5.500v7q0 .5-.5.500H1q-.5 0-.5-.5zM3 .500h5.500q2 0 2 2V8" stroke="#fff" /></I></WinButton>
        <WinButton aria-label="Close"><I w={11}><path d="M.5.500l10 10M10.500.500l-10 10" stroke="#fff" /></I></WinButton>
      </TitleBar>
      <MenuBar>
        {["_File", "_Edit", "_View", "_Window", "_Help"].map((t) => <MenuButton key={t}><Keyed text={t} /></MenuButton>)}
        <CloseDoc aria-label="Close document"><I w={7} h={7}><path d="M.7.700l5.600 5.600M6.300.700L.7 6.300" stroke="#000" strokeWidth="2.200" /></I></CloseDoc>
      </MenuBar>

      <Bar>
        <LabelButton><FolderIcon />Open</LabelButton>
        <Sep $left={19} $right={16} />
        <LabelButton><CreateIcon />Create<Caret /></LabelButton>
        <Sep $left={20} $right={6} />
        {[["Save", SaveIcon], ["Share", CloudIcon], ["Print", PrintIcon], ["Edit", EditDocIcon], ["Mail", MailIcon]].map(([l, X]) => (
          <IconButton key={l} $w={38} aria-label={l}><X /></IconButton>
        ))}
        <Sep $left={6} $right={9} />
        {[["Settings", GearIcon], ["Note", NoteIcon], ["Highlight", HighlightIcon], ["Delete page", DeletePageIcon], ["Rotate page", RotatePageIcon], ["Extract page", ExportPageIcon], ["Edit PDF", PdfEditIcon]].map(([l, X]) => (
          <IconButton key={l} $w={33} aria-label={l}><X /></IconButton>
        ))}
        <Customize>Customize<Caret /></Customize>
        <Sep $left={25} $right={8} />
        <IconButton $w={41} aria-label="Read mode"><ExpandIcon /></IconButton>
      </Bar>

      <Bar $dark>
        <IconButton $w={33} aria-label="Previous page"><Round faded><path d="M12 5l7 7h-4v6H9v-6H5z" /></Round></IconButton>
        <IconButton $w={33} aria-label="Next page"><Round><path d="M12 19l7-7h-4V6H9v6H5z" /></Round></IconButton>
        <PageInput aria-label="Page" defaultValue="1" />
        <PageCount>{"/  2"}</PageCount>
        <Sep />
        <ToolToggle aria-label="Select"><SelectIcon /></ToolToggle>
        <IconButton $w={33} aria-label="Hand"><HandIcon /></IconButton>
        <Sep $left={6} $right={6} />
        <IconButton $w={33} aria-label="Zoom out"><Round><path d="M5 10h14v4H5z" /></Round></IconButton>
        <IconButton $w={33} aria-label="Zoom in"><Round><path d="M10 5h4v5h5v4h-5v5h-4v-5H5v-4h5z" /></Round></IconButton>
        <ZoomBox>
          <ZoomSelect aria-label="Zoom" defaultValue="100%"><option>100%</option></ZoomSelect>
          <Caret />
        </ZoomBox>
        <Sep $left={9} $right={6} />
        <IconButton $w={33} aria-label="Fit width"><FitWidthIcon /></IconButton>
        <IconButton $w={33} aria-label="Fit page"><FitPageIcon /></IconButton>
        <PaneLinks>
          <PaneButton $first>Tools</PaneButton>
          <PaneButton>Fill &amp; Sign</PaneButton>
          <PaneButton>Comment</PaneButton>
        </PaneLinks>
      </Bar>

      <Work>
        <Side>
          <SideButton aria-label="Pages"><ThumbsIcon /></SideButton>
          <SideButton aria-label="Bookmarks"><BookmarkIcon /></SideButton>
          <SideButton aria-label="Attachments"><ClipIcon /></SideButton>
          <SideButton aria-label="Signatures"><SignIcon /></SideButton>
        </Side>
        <Canvas><Sheet><Assessments /></Sheet></Canvas>
        <Track><SplitGrip /><Thumb /></Track>
      </Work>

      <TaskBar>
        <Task aria-label="Start"><StartIcon /></Task>
        <Task $open aria-label="File Explorer"><ExplorerIcon /></Task>
        <Task $open aria-label="Keyboard app"><KIcon /></Task>
        <Task $open aria-label="PowerToys"><ToysIcon /></Task>
        <Task $open aria-label="Todoist"><TodoistIcon /><Count>3</Count></Task>
        <Task $open aria-label="Recorder"><SIcon /></Task>
        <Task $open aria-label="Vivaldi"><VivaldiIcon /></Task>
        <Task $open aria-label="Chrome"><ChromeIcon /></Task>
        <Task $open aria-label="Outlook"><OutlookIcon /></Task>
        <Task $open aria-label="QuickBooks"><QbIcon /></Task>
        <Task aria-label="Snipping Tool"><SnipIcon /></Task>
        <Task aria-label="Scanner"><ScannerIcon /></Task>
        <Task aria-label="Word"><OfficeIcon c={["#41a5ee", "#2b7cd3", "#185abd", "#103f91"]}><path d="M2.500 9l1.700 6L6 10l1.800 5 1.700-6" stroke="#fff" strokeWidth="1.500" /></OfficeIcon></Task>
        <Task aria-label="Excel"><OfficeIcon c={["#33c481", "#21a366", "#107c41", "#185c37"]}><path d="M3.500 9l5 6M8.500 9l-5 6" stroke="#fff" strokeWidth="1.700" /></OfficeIcon></Task>
        <Task $active aria-label="Acrobat"><AcroTask /></Task>
        <Task $open aria-label="Grammar app"><GIcon /></Task>
        <Tray>
          <TrayButton aria-label="Show hidden icons"><I w={11} h={7}><path d="M.7 6.300l4.800-5 4.800 5" stroke="#222" strokeWidth="1.400" /></I></TrayButton>
          <TrayButton aria-label="PowerToys"><ToysIcon w={13} /></TrayButton>
          <TrayButton aria-label="Flame"><I w={16}><circle cx="8" cy="8" r="8" fill="#7a0bb0" /><path d="M3 9l2-4 1 2 3-4v3l4-2c0 4-1 8-5 8-3 0-5-1-5-3z" fill="#ff7a1a" /><path d="M5 10l4-3 1 2-2 3z" fill="#ffd02b" /></I></TrayButton>
          <TrayButton aria-label="Bluetooth"><I w={12} h={16}><rect width="12" height="16" rx="6" fill="#0a7cf2" /><path d="M3 5.500l6 5L6 13V3l3 2.500-6 5" stroke="#fff" strokeWidth="1.200" /></I></TrayButton>
          <TrayButton aria-label="Microphone"><I w={12} h={16}><rect x="3.500" y=".6" width="5" height="10" rx="2.500" stroke="#6a6250" strokeWidth="1.100" /><path d="M.7 7.500c0 7 10.600 7 10.600 0M6 13v3" stroke="#6a6250" strokeWidth="1.200" /></I></TrayButton>
          <TrayButton aria-label="Network"><I w={16} h={16}><path d="M10 1.500H1v10h11M4 15.500h8M6 12v3M10 12v3M13.500 15V7M11.500 1h4v4q0 2-2 2t-2-2zM12 3.500h3" stroke="#222" strokeWidth="1.200" /></I></TrayButton>
          <TrayButton $w={16} aria-label="Volume"><I w={17} h={14}><path d="M.6 4.800h2.500L6.500 1.500v11L3.100 9.200H.600z" stroke="#222" strokeWidth="1.100" /><path d="M9 5q1.200 2 0 4M11.500 3q2.500 4 0 8M14 1q3.800 6 0 12" stroke="#222" strokeWidth="1.100" /></I></TrayButton>
          <Clock>7:22 PM<br />3/12/2025</Clock>
        </Tray>
      </TaskBar>

      <Menu>
        {menuItems.map((m, i) => m
          ? <li key={i}><MenuItem $on={i === 0}><Keyed text={m[0]} />{m[1] && <span>{m[1]}</span>}</MenuItem></li>
          : <Rule key={i} />)}
      </Menu>
    </Shell>
  );
}
